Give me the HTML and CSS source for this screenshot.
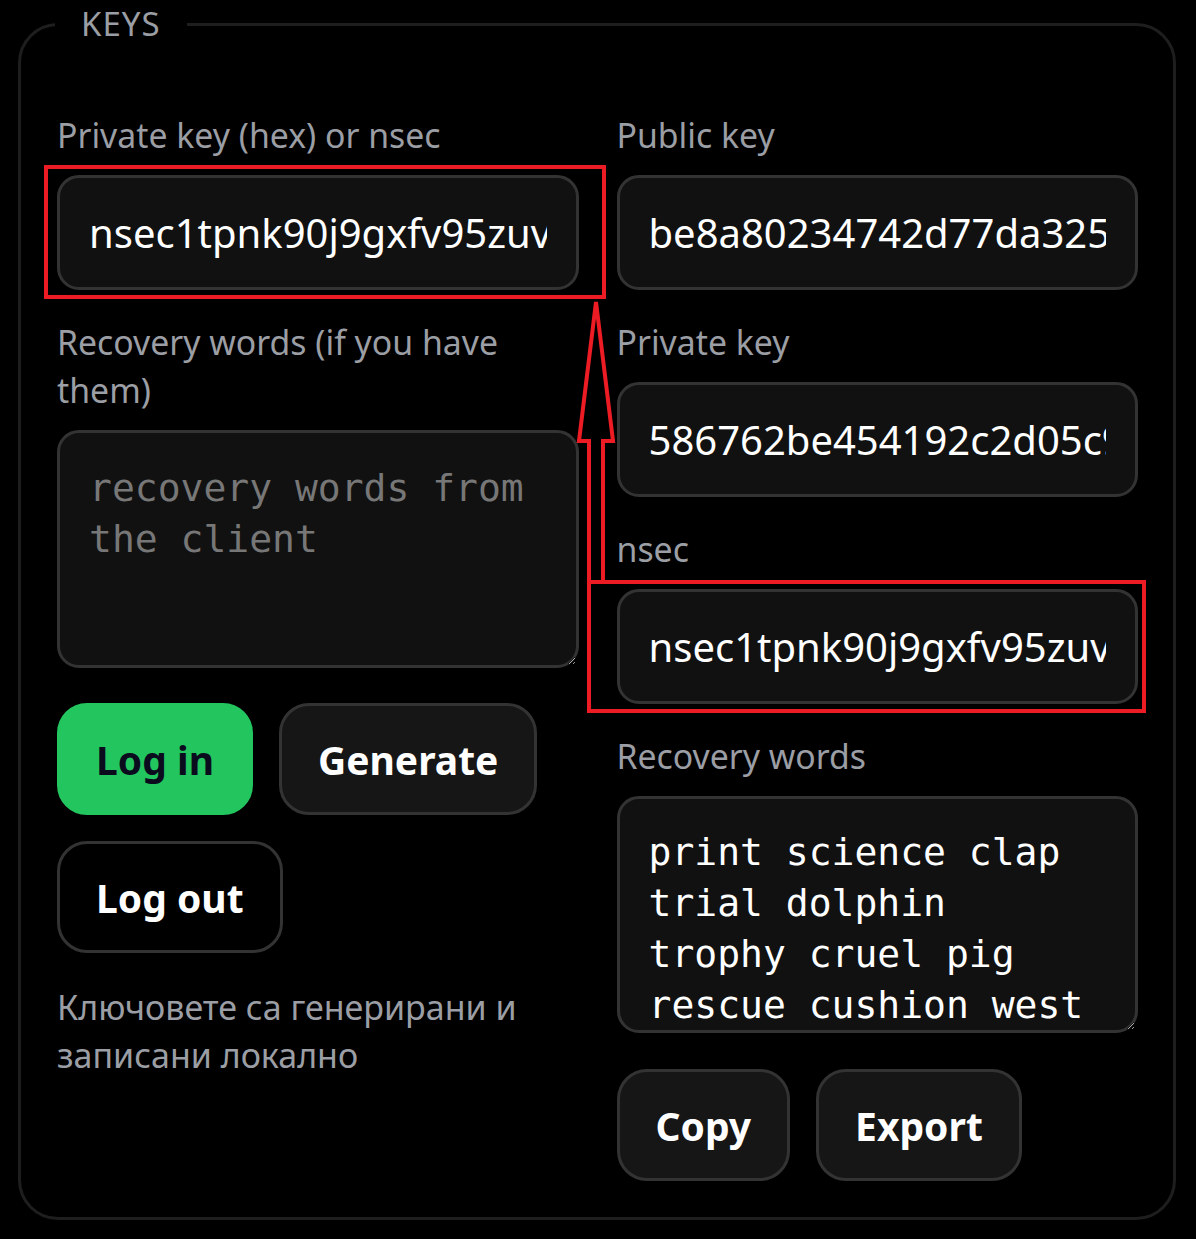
FILE: index.html
```html
<!DOCTYPE html>
<html lang="en">
<head>
<meta charset="utf-8">
<title>Keys</title>
<link rel="stylesheet" href="styles.css">
</head>
<body>
<div class="wrap">
  <fieldset class="keys">
    <legend class="keys-legend">KEYS</legend>
    <div class="cols">
      <div class="col">
        <div class="field">
          <label class="lbl">Private key (hex) or nsec</label>
          <input class="inp" type="text" value="nsec1tpnk90j9gxfv95zuvs8m2q7c4lk0d3hw5xya6rjf9en2tu8gqp4lz7mcv3k">
        </div>
        <div class="field">
          <label class="lbl">Recovery words (if you have them)</label>
          <textarea class="ta ta-left" placeholder="recovery words from the client"></textarea>
        </div>
        <div class="btns btns-left">
          <button class="btn btn-green">Log in</button>
          <button class="btn btn-dark">Generate</button>
          <button class="btn btn-outline">Log out</button>
        </div>
        <p class="note">Ключовете са генерирани и записани локално</p>
      </div>
      <div class="col">
        <div class="field">
          <label class="lbl">Public key</label>
          <input class="inp" type="text" value="be8a80234742d77da325c1f0e9a6b4d8c2e7f1a3b5d9e0c4f6a8b2d1e3f5a7c9">
        </div>
        <div class="field">
          <label class="lbl">Private key</label>
          <input class="inp" type="text" value="586762be454192c2d05c9e1a7f3b8d2c4e6a0f9b1d3c5e7a9f2b4d6c8e0a1f3b">
        </div>
        <div class="field">
          <label class="lbl">nsec</label>
          <input class="inp" type="text" value="nsec1tpnk90j9gxfv95zuvs8m2q7c4lk0d3hw5xya6rjf9en2tu8gqp4lz7mcv3k">
        </div>
        <div class="field">
          <label class="lbl">Recovery words</label>
          <textarea class="ta ta-right">print science clap trial dolphin trophy cruel pig rescue cushion west</textarea>
        </div>
        <div class="btns btns-right">
          <button class="btn btn-dark">Copy</button>
          <button class="btn btn-dark">Export</button>
        </div>
      </div>
    </div>
  </fieldset>
  <svg class="marks" width="1196" height="1239" viewBox="0 0 1196 1239" xmlns="http://www.w3.org/2000/svg">
    <rect x="46" y="167" width="558" height="130" fill="none" stroke="#ed1c24" stroke-width="4"/>
    <rect x="589" y="582" width="555" height="129" fill="none" stroke="#ed1c24" stroke-width="4"/>
    <polyline points="589,582 589,441 579,441 596,302 613,441 603,441 603,582" fill="none" stroke="#ed1c24" stroke-width="4" stroke-linejoin="miter"/>
  </svg>
</div>
</body>
</html>
```
FILE: styles.css
```css
html, body {
  margin: 0;
  padding: 0;
  background: #000;
}

body {
  font-family: "Noto Sans", "Open Sans", sans-serif;
  color: #fff;
}

.wrap {
  position: relative;
  padding: 0 20px 20px 18px;
  width: 1196px;
  box-sizing: border-box;
}

.keys {
  margin: 0;
  border: 3px solid #1e1e1e;
  border-radius: 40px;
  padding: 63px 35px 36px 36px;
  min-width: 0;
}

.keys-legend {
  margin-left: -2px;
  padding: 0 26px;
  font-size: 33px;
  line-height: 48px;
  color: #9b9ea4;
  letter-spacing: 1px;
}

.cols {
  display: grid;
  grid-template-columns: 1fr 1fr;
  column-gap: 38px;
  align-items: start;
}

.col {
  display: flex;
  flex-direction: column;
  min-width: 0;
}

.field {
  display: flex;
  flex-direction: column;
  margin-bottom: 28px;
}

.lbl {
  font-size: 33.8px;
  line-height: 48px;
  color: #9b9ea4;
  margin-bottom: 16px;
}

.inp {
  box-sizing: border-box;
  width: 100%;
  height: 115px;
  margin: 0;
  padding: 0 29px;
  border: 3px solid #333;
  border-radius: 22px;
  background: #111;
  color: #fff;
  font-family: "Noto Sans", "Open Sans", sans-serif;
  font-size: 40px;
  outline: none;
}

.ta {
  box-sizing: border-box;
  width: 100%;
  margin: 0;
  padding: 28px 30px 0 29px;
  border: 3px solid #333;
  border-radius: 22px;
  background: #111;
  color: #fff;
  font-family: "DejaVu Sans Mono", "Liberation Mono", monospace;
  font-size: 38px;
  line-height: 51px;
  overflow: hidden;
  resize: vertical;
  outline: none;
}

.ta::placeholder {
  color: #777;
}

.ta-left {
  height: 238px;
  padding-top: 30px;
}

.ta-right {
  height: 237px;
}

.btns {
  display: flex;
  flex-wrap: wrap;
  gap: 26px;
}

.btns-left {
  margin-top: 7px;
}

.btns-right {
  margin-top: 8px;
}

.btn {
  box-sizing: border-box;
  height: 112px;
  padding: 0 36px;
  border: 3px solid #333;
  border-radius: 30px;
  font-family: "Noto Sans", "Open Sans", sans-serif;
  font-weight: 700;
  font-size: 39px;
  color: #fff;
  background: #161616;
  cursor: pointer;
}

.btn-green {
  background: #22c55e;
  border-color: #22c55e;
  color: #0b0b1e;
}

.btn-outline {
  background: #000;
}

.note {
  margin: 30px 0 0;
  font-size: 34px;
  line-height: 48px;
  color: #9b9ea4;
}

.marks {
  position: absolute;
  left: 0;
  top: 0;
  pointer-events: none;
}
```
